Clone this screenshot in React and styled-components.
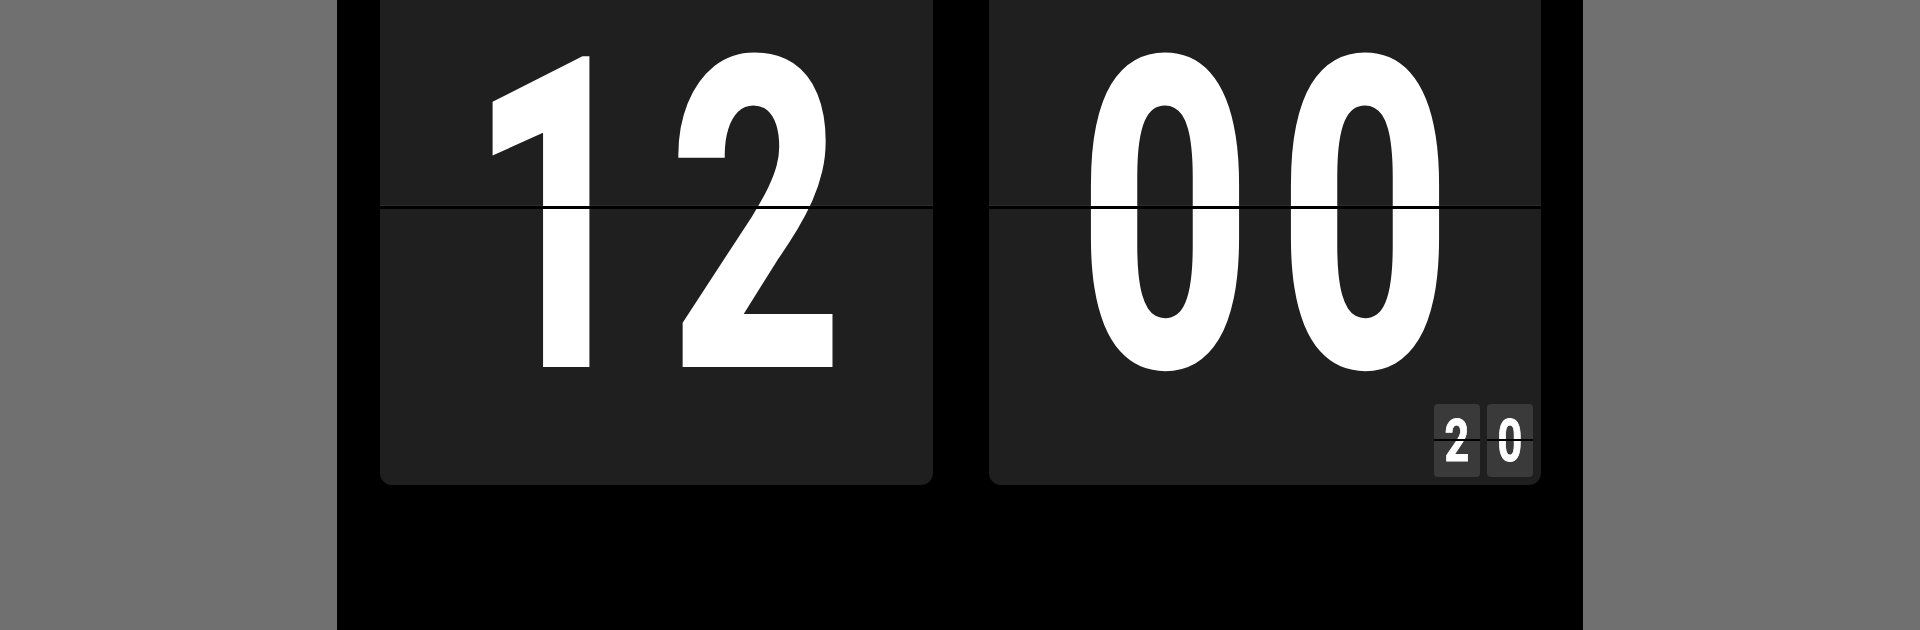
import React from 'react'
import styled, { createGlobalStyle } from 'styled-components'

const Global = createGlobalStyle`
  body {
    margin: 0;
    background: #707070;
  }
`

const Stage = styled.main`
  width: 1246px;
  height: 630px;
  margin: 0 auto;
  padding: 0 42px 0 43px;
  box-sizing: border-box;
  background: #000;
  display: flex;
  gap: 56px;
  align-items: flex-start;
`

const Card = styled.section`
  flex: 1;
  height: 485px;
  background: #1f1f1f;
  border-radius: 0 0 12px 12px;
  position: relative;
  display: flex;
  flex-direction: column;

  &::after {
    content: '';
    position: absolute;
    left: 0;
    right: 0;
    top: 206px;
    height: 3px;
    background: #000;
    box-shadow: 0 -1px 0 rgba(255, 255, 255, 0.06);
  }
`

const Digits = styled.div`
  height: 404px;
  display: flex;
  justify-content: center;
`

const Digit = styled.span`
  width: ${p => p.$pitch}px;
  display: flex;
  justify-content: center;
  font-family: Roboto, 'Liberation Sans', sans-serif;
  font-weight: 700;
  font-size: ${p => p.$size}px;
  line-height: ${p => p.$line}px;
  color: #fff;
  -webkit-text-stroke: ${p => p.$stroke}px #fff;
  transform: scaleX(${p => p.$squeeze});
`

const Seconds = styled.div`
  align-self: flex-end;
  display: flex;
  gap: 7px;
  padding: 0 8px 8px 0;
`

const SmallCard = styled.div`
  width: 46px;
  height: 73px;
  background: #3a3a3a;
  border-radius: 4px;
  position: relative;
  display: flex;
  justify-content: center;

  &::after {
    content: '';
    position: absolute;
    left: 0;
    right: 0;
    top: 35px;
    height: 2px;
    background: #000;
  }
`

const BigPair = ({ value }) => (
  <Digits>
    {value.split('').map((d, i) => (
      <Digit key={i} $pitch={200} $size={428} $line={435} $stroke={6} $squeeze={0.7}>{d}</Digit>
    ))}
  </Digits>
)

const App = () => {
  return (
    <>
      <Global />
      <Stage>
        <Card>
          <BigPair value="12" />
        </Card>
        <Card>
          <BigPair value="00" />
          <Seconds>
            {'20'.split('').map((d, i) => (
              <SmallCard key={i}>
                <Digit $pitch={46} $size={60} $line={74} $stroke={1} $squeeze={0.72}>{d}</Digit>
              </SmallCard>
            ))}
          </Seconds>
        </Card>
      </Stage>
    </>
  )
}

export default App
